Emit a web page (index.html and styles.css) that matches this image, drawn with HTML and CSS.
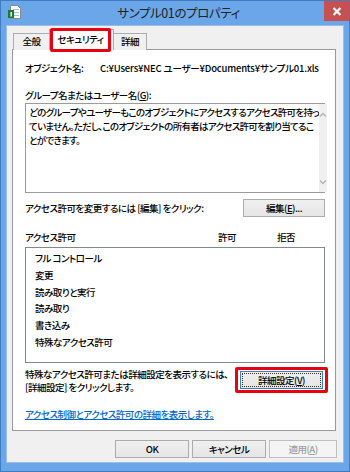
FILE: index.html
```html
<!DOCTYPE html>
<html lang="ja">
<head>
    <meta charset="UTF-8">
    <meta name="viewport" content="width=device-width, initial-scale=1.0">
    <title>サンプル01のプロパティ</title>
    <link rel="stylesheet" href="styles.css">
</head>
<body>
    <div class="window">
        <div class="title-bar">
            <svg class="app-icon" width="13" height="14" viewBox="0 0 13 14">
                <path d="M2.5,0.5H9.5L12.5,3.5V13.5H2.5Z" fill="#fff" stroke="#8a8a8a"/>
                <rect x="5" y="4" width="6" height="1" fill="#9cc"/>
                <rect x="5" y="7" width="6" height="1" fill="#9cc"/>
                <rect x="5" y="10" width="6" height="1" fill="#9cc"/>
                <rect x="0" y="5" width="6" height="8" fill="#1f7a3a"/>
                <rect x="2.5" y="7" width="1.4" height="4.5" fill="#fff"/>
            </svg>
            <div class="title">サンプル01のプロパティ</div>
            <div class="close-btn">
                <svg width="10" height="9" viewBox="0 0 10 9">
                    <path d="M1.5,1L8.5,8M8.5,1L1.5,8" stroke="#fff" stroke-width="2.2"/>
                </svg>
            </div>
        </div>

        <div class="client">
            <div class="tabs">
                <div class="tab tab-general">全般</div>
                <div class="tab tab-active"><span class="tab-mark">セキュリティ</span></div>
                <div class="tab tab-detail">詳細</div>
            </div>

            <div class="panel">
                <div class="obj-row">
                    <span class="obj-label">オブジェクト名:</span>
                    <span class="obj-path">C:¥Users¥NEC ユーザー¥Documents¥サンプル01.xls</span>
                </div>

                <div class="group-label">グループ名またはユーザー名(<u>G</u>):</div>
                <div class="textbox">
                    <div class="textbox-text">どのグループやユーザーもこのオブジェクトにアクセスするアクセス許可を持っ<br>ていません。ただし、このオブジェクトの所有者はアクセス許可を割り当てるこ<br>とができます。</div>
                    <div class="scrollbar">
                        <svg width="8" height="5" viewBox="0 0 8 5"><path d="M1,4.5L4,1.5L7,4.5" fill="none" stroke="#b5b5b5" stroke-width="1.3"/></svg>
                        <svg width="8" height="5" viewBox="0 0 8 5"><path d="M1,0.5L4,3.5L7,0.5" fill="none" stroke="#b5b5b5" stroke-width="1.3"/></svg>
                    </div>
                </div>

                <div class="edit-row">
                    <span>アクセス許可を変更するには [編集] をクリック:</span>
                    <button class="btn btn-edit">編集(<u>E</u>)...</button>
                </div>

                <div class="perm-header">
                    <span>アクセス許可</span>
                    <span>許可</span>
                    <span>拒否</span>
                </div>
                <div class="listbox">
                    <div class="list-item">フル コントロール</div>
                    <div class="list-item">変更</div>
                    <div class="list-item">読み取りと実行</div>
                    <div class="list-item">読み取り</div>
                    <div class="list-item">書き込み</div>
                    <div class="list-item">特殊なアクセス許可</div>
                </div>

                <div class="note-row">
                    <div class="note-text">特殊なアクセス許可または詳細設定を表示するには、<br>[詳細設定] をクリックします。</div>
                    <div class="btn-mark">
                        <button class="btn btn-focus"><span class="focus-rect">詳細設定(<u>V</u>)</span></button>
                    </div>
                </div>

                <a class="help-link" href="#">アクセス制御とアクセス許可の詳細を表示します。</a>
            </div>

            <div class="dialog-buttons">
                <button class="btn btn-dialog">OK</button>
                <button class="btn btn-dialog">キャンセル</button>
                <button class="btn btn-dialog btn-disabled">適用(<u>A</u>)</button>
            </div>
        </div>
    </div>
</body>
</html>
```

FILE: styles.css
```css
* {
    margin: 0;
    padding: 0;
    box-sizing: border-box;
}

body {
    font-family: "Noto Sans CJK JP", "Noto Sans", sans-serif;
    font-size: 9.5px;
    font-weight: 500;
    letter-spacing: -0.5px;
    line-height: 14px;
    color: #000;
    background: #6ba6e8;
    font-feature-settings: "palt";
    white-space: nowrap;
}

.window {
    width: 350px;
    height: 472px;
    background: #6ba6e8;
    border: 1px solid #3f7cc6;
    padding: 0 5px 8px 5px;
    display: flex;
    flex-direction: column;
}

.title-bar {
    height: 24px;
    display: flex;
    align-items: flex-start;
}

.app-icon {
    margin: 4px 0 0 2px;
}

.title {
    flex: 1;
    text-align: center;
    font-size: 12.5px;
    font-weight: 400;
    letter-spacing: -0.4px;
    line-height: 24px;
    color: #222;
    padding-left: 12px;
}

.close-btn {
    width: 25px;
    height: 20px;
    margin-right: -5px;
    background: #c75050;
    display: flex;
    align-items: center;
    justify-content: center;
}

.client {
    flex: 1;
    background: #f0f0f0;
    border: 1px solid #9dbde6;
    padding: 7px 6px 0 5px;
}

.tabs {
    display: flex;
    height: 16px;
    margin-left: 1px;
    position: relative;
    z-index: 1;
}

.tab {
    height: 17px;
    background: #f0f0f0;
    border: 1px solid #adadad;
    border-bottom: none;
    line-height: 15px;
    text-align: center;
    margin-right: -1px;
}

.tab-general {
    width: 37px;
}

.tab-active {
    background: #fff;
    height: 21px;
    margin-top: -4px;
    padding: 0 2px;
}

.tab-mark {
    display: block;
    width: 61px;
    height: 24px;
    margin: -2px 0 0 -2px;
    border: 3px solid #e8000f;
    border-radius: 2px;
    line-height: 16px;
    text-align: center;
}

.tab-detail {
    width: 34px;
}

.panel {
    width: 324px;
    height: 382px;
    background: #fff;
    border: 1px solid #9a9a9a;
    padding: 11px 10px 0 12px;
}

.obj-row {
    display: flex;
}

.obj-label {
    width: 75px;
}

.obj-path {
    letter-spacing: -0.2px;
}

.group-label {
    margin-top: 13px;
}

.textbox {
    margin-top: 1px;
    height: 90px;
    border: 1px solid #999ba0;
    display: flex;
}

.textbox-text {
    flex: 1;
    padding: 1px 0 0 3px;
    letter-spacing: -0.7px;
}

.scrollbar {
    width: 14px;
    background: #f0f0f0;
    display: flex;
    flex-direction: column;
    justify-content: space-between;
    align-items: center;
    padding: 8px 0 7px;
}

.edit-row {
    margin-top: 6px;
    height: 18px;
    display: flex;
    align-items: center;
    justify-content: space-between;
}

.btn {
    font-family: inherit;
    font-size: inherit;
    font-weight: inherit;
    letter-spacing: inherit;
    font-feature-settings: "palt";
    color: #000;
    background: linear-gradient(#f0f0f0, #e5e5e5);
    border: 1px solid #acacac;
    line-height: 14px;
}

.btn-edit {
    width: 82px;
    height: 18px;
}

.perm-header {
    margin-top: 13px;
    display: grid;
    grid-template-columns: 193px 59px 1fr;
}

.listbox {
    margin-top: 3px;
    height: 116px;
    border: 1px solid #828790;
    padding: 2px 0 0 9px;
}

.list-item {
    line-height: 16.8px;
}

.note-row {
    margin-top: 4px;
    display: flex;
    justify-content: space-between;
}

.note-text {
    padding-top: 1px;
    line-height: 13px;
}

.btn-mark {
    width: 93px;
    height: 26px;
    margin-right: -3px;
    border: 3px solid #e8000f;
    border-radius: 2px;
    padding: 1px 2px;
}

.btn-focus {
    width: 83px;
    height: 18px;
    border-color: #3c7fb1;
    padding: 1px;
}

.focus-rect {
    display: block;
    height: 14px;
    border: 1px dotted #333;
    line-height: 12px;
}

.help-link {
    display: inline-block;
    margin-top: 13px;
    color: #0066cc;
    text-decoration: underline;
}

.dialog-buttons {
    margin-top: 9px;
    display: flex;
    justify-content: flex-end;
    gap: 3px;
}

.btn-dialog {
    width: 74px;
    height: 18px;
}

.btn-disabled {
    color: #a0a0a0;
    border-color: #bfbfbf;
    background: #f4f4f4;
    width: 68px;
}
```
